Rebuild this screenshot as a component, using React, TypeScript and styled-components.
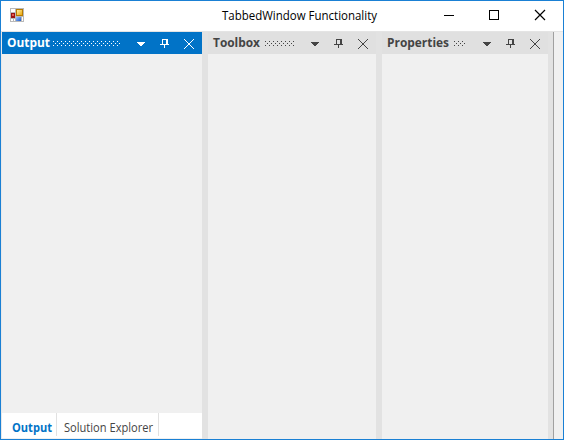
import React from "react";
import styled, { createGlobalStyle } from "styled-components";

const GlobalStyle = createGlobalStyle`
  * { box-sizing: border-box; }
  body { margin: 0; overflow: hidden; background: #fff; }
`;

const Window = styled.main`
  width: 564px;
  height: 440px;
  display: flex;
  flex-direction: column;
  border: 1px solid #1a80d4;
  background: #fff;
  font-family: "Open Sans", "Noto Sans", sans-serif;
`;

const TitleBar = styled.header`
  height: 30px;
  flex: none;
  display: grid;
  grid-template-columns: 221px 205px 136px;
  align-items: start;
`;

const AppIcon = styled.svg`
  display: block;
  margin: 7px 0 0 9px;
`;

const Fit = styled.svg<{ $weight?: number; $color: string; $size: number }>`
  display: block;
  flex: none;
  overflow: visible;
  fill: ${(p) => p.$color};
  font-family: "Open Sans", "Noto Sans", sans-serif;
  font-size: ${(p) => p.$size}px;
  font-weight: ${(p) => p.$weight ?? 400};
`;

const Controls = styled.svg`
  display: block;
`;

const Workspace = styled.div`
  flex: 1;
  display: flex;
  min-height: 0;
  padding-left: 1px;
  border-top: 1px solid #e4e4e4;
  background: #e9e9e9;
`;

const Pane = styled.section<{ $width: number }>`
  width: ${(p) => p.$width}px;
  flex: none;
  display: flex;
  flex-direction: column;
`;

const PaneHeader = styled.div<{ $active?: boolean }>`
  height: 22px;
  flex: none;
  display: flex;
  padding-left: 5px;
  color: ${(p) => (p.$active ? "#fff" : "#444")};
  background: ${(p) => (p.$active ? "#0173c7" : "#e0e0e0")};
`;

const Grip = styled.svg`
  display: block;
  flex: none;
  margin-top: 9px;
`;

const PaneIcons = styled.svg`
  display: block;
  flex: none;
  margin-left: auto;
`;

const PaneBody = styled.div`
  flex: 1;
  background: #f0f0f0;
`;

const Splitter = styled.div<{ $width: number }>`
  width: ${(p) => p.$width}px;
  flex: none;
  background: #e2e2e2;
`;

const TabStrip = styled.div`
  height: 26px;
  flex: none;
  display: flex;
  border-bottom: 1px solid #f0f0f0;
  background: #fff;
`;

const Tab = styled.div<{ $width: number; $inset: number }>`
  width: ${(p) => p.$width}px;
  height: 23px;
  padding-left: ${(p) => p.$inset}px;
  border-right: 1px solid #e1e1e1;
`;

const DockEdge = styled.div`
  flex: 1;
  border-left: 1px solid #a0a0a0;
  background: #f0f0f0;
`;

interface LabelProps {
  text: string;
  width: number;
  height: number;
  baseline: number;
  size: number;
  color: string;
  weight?: number;
}

function Label({ text, width, height, baseline, size, color, weight }: LabelProps) {
  return (
    <Fit width={width} height={height} $size={size} $color={color} $weight={weight}>
      <text x="0" y={baseline} textLength={width} lengthAdjust="spacingAndGlyphs">{text}</text>
    </Fit>
  );
}

function GripDots({ width, gap }: { width: number; gap: number }) {
  const dots: string[] = [];
  for (let y = 0; y < 5; y += 2) {
    for (let x = y === 2 ? 2 : 0; x < width; x += 4) dots.push(`M${x} ${y}h1v1h-1z`);
  }
  return (
    <Grip width={width} height="5" style={{ marginLeft: gap }} shapeRendering="crispEdges">
      <path d={dots.join("")} fill="currentColor" />
    </Grip>
  );
}

interface DockPaneProps {
  title: string;
  titleWidth: number;
  width: number;
  gripWidth: number;
  gripGap: number;
  active?: boolean;
  children?: React.ReactNode;
}

function DockPane({ title, titleWidth, width, gripWidth, gripGap, active, children }: DockPaneProps) {
  return (
    <Pane $width={width}>
      <PaneHeader $active={active}>
        <Label text={title} width={titleWidth} height={22} baseline={15} size={12} weight={700} color={active ? "#fff" : "#444"} />
        <GripDots width={gripWidth} gap={gripGap} />
        <PaneIcons width="66" height="22" fill="currentColor" shapeRendering="crispEdges">
          <path d="M1 10h8v1h-1v1h-1v1h-1v1h-2v-1h-1v-1h-1v-1h-1z" />
          <path d="M26 7h6v5h1v1h-4v3h-1v-3h-4v-1h2zM27 8v4h3v-4z" fillRule="evenodd" />
          <path d="M48 7l10 10M58 7l-10 10" fill="none" stroke="currentColor" shapeRendering="auto" />
        </PaneIcons>
      </PaneHeader>
      <PaneBody />
      {children}
    </Pane>
  );
}

export default function App() {
  return (
    <>
      <GlobalStyle />
      <Window>
        <TitleBar>
          <AppIcon width="14" height="14" viewBox="0 0 14 14">
            <defs>
              <linearGradient id="gold" x2="1" y2="1">
                <stop stopColor="#fff0a0" /><stop offset="1" stopColor="#e9a60d" />
              </linearGradient>
              <linearGradient id="blue" x2="1" y2="1">
                <stop stopColor="#9dc4ff" /><stop offset="1" stopColor="#1f5ac8" />
              </linearGradient>
            </defs>
            <path fill="#b9b9b9" d="M0 0h14v14H0z" />
            <path fill="#fff" d="M1 1h4v3H1zM1 11h2v2H1zM4 11h1v2H4zM12 9h1v4h-1z" />
            <path fill="#9b1414" d="M1 5h4v5H1z" />
            <path fill="#e45a50" d="M2 6h2v2H2z" />
            <path fill="#b87b00" d="M6 1h7v7H6z" />
            <path fill="url(#gold)" d="M7 2h5v5H7z" />
            <path fill="url(#blue)" d="M6 9h5v4H6z" />
          </AppIcon>
          <Label text="TabbedWindow Functionality" width={155} height={30} baseline={19} size={12} color="#000" />
          <Controls width="136" height="30" fill="none" stroke="#000">
            <path d="M17 14.5h10M62.5 9.5h9v9h-9z" shapeRendering="crispEdges" />
            <path d="M108 9l10 10M118 9l-10 10" strokeWidth="1.2" />
          </Controls>
        </TitleBar>
        <Workspace>
          <DockPane title="Output" titleWidth={43} width={200} gripWidth={67} gripGap={3} active>
            <TabStrip>
              <Tab $width={55} $inset={10}>
                <Label text="Output" width={40} height={23} baseline={19} size={12} weight={700} color="#0173c7" />
              </Tab>
              <Tab $width={102} $inset={7}>
                <Label text="Solution Explorer" width={89} height={23} baseline={19} size={12} color="#444" />
              </Tab>
            </TabStrip>
          </DockPane>
          <Splitter $width={6} />
          <DockPane title="Toolbox" titleWidth={47} width={168} gripWidth={30} gripGap={5} />
          <Splitter $width={6} />
          <DockPane title="Properties" titleWidth={62} width={166} gripWidth={12} gripGap={5} />
          <Splitter $width={5} />
          <DockEdge />
        </Workspace>
      </Window>
    </>
  );
}
